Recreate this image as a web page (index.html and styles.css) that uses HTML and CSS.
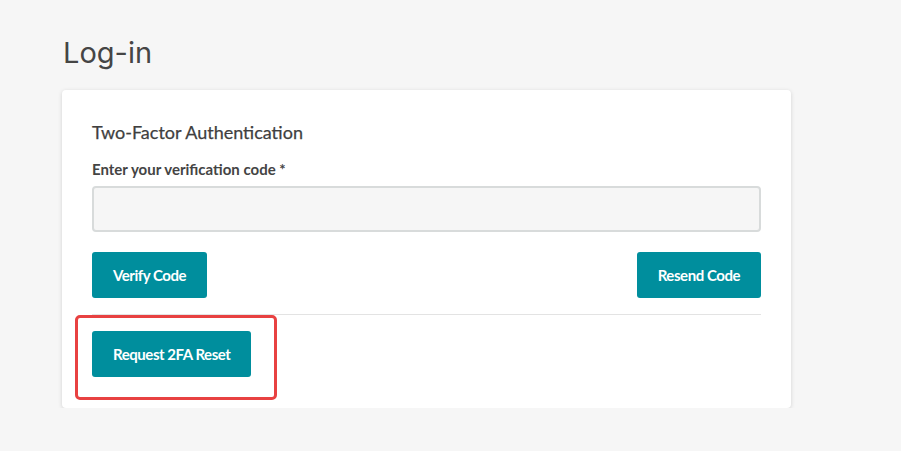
FILE: index.html
```html
<!DOCTYPE html>
<html lang="en">
<head>
<meta charset="utf-8">
<title>Log-in</title>
<link rel="stylesheet" href="styles.css">
</head>
<body>
<main class="page">
  <h1 class="page-title">Log-in</h1>
  <section class="card">
    <h2 class="card-title">Two-Factor Authentication</h2>
    <label class="field-label" for="code">Enter your verification code *</label>
    <input class="field-input" id="code" type="text">
    <div class="actions">
      <button class="btn" type="button">Verify Code</button>
      <button class="btn" type="button">Resend Code</button>
    </div>
    <hr class="divider">
    <div class="reset">
      <span class="highlight">
        <button class="btn" type="button">Request 2FA Reset</button>
      </span>
    </div>
  </section>
</main>
</body>
</html>
```

FILE: styles.css
```css
* { box-sizing: border-box; }
html, body { margin: 0; padding: 0; }
body {
  background: #f6f6f6;
  font-family: Lato, "Liberation Sans", sans-serif;
  color: #444;
}
.page {
  padding: 35px 0 0 62px;
  width: 791px;
}
.page-title {
  margin: 0 0 20px 1px;
  font-family: Inter, "DejaVu Sans", sans-serif;
  font-weight: 400;
  font-size: 29px;
  line-height: 35px;
  color: #454545;
}
.card {
  width: 729px;
  background: #fff;
  border-radius: 4px;
  box-shadow: 0 1px 4px rgba(0,0,0,0.15);
  padding: 31px 30px 31px 30px;
}
.card-title {
  margin: 0 0 16px;
  font-size: 18px;
  font-weight: 400;
  line-height: 23px;
  color: #3f3f3f;
  -webkit-text-stroke: 0.25px #3f3f3f;
}
.field-label {
  display: block;
  font-size: 15px;
  font-weight: 700;
  line-height: 18px;
  color: #444;
  margin-bottom: 8px;
}
.field-input {
  display: block;
  width: 100%;
  height: 46px;
  background: #f6f6f6;
  border: 2px solid #d8dbdb;
  border-radius: 4px;
  margin: 0 0 20px;
}
.actions {
  display: flex;
  justify-content: space-between;
}
.btn {
  height: 46px;
  padding: 0 21px;
  background: #008e9d;
  color: #fff;
  border: 0;
  border-radius: 3px;
  font-family: Lato, "Liberation Sans", sans-serif;
  font-weight: 700;
  font-size: 15px;
  letter-spacing: -0.45px;
}
.divider {
  border: 0;
  border-top: 1px solid #e3e3e3;
  margin: 16px 0 16px;
}
.reset { display: flex; }
.highlight {
  position: relative;
  display: inline-block;
}
.highlight .btn { display: block; }
.highlight::after {
  content: "";
  position: absolute;
  left: -17px;
  top: -16px;
  right: -26px;
  bottom: -23px;
  border: 3px solid #e84141;
  border-radius: 5px;
  pointer-events: none;
}
```
